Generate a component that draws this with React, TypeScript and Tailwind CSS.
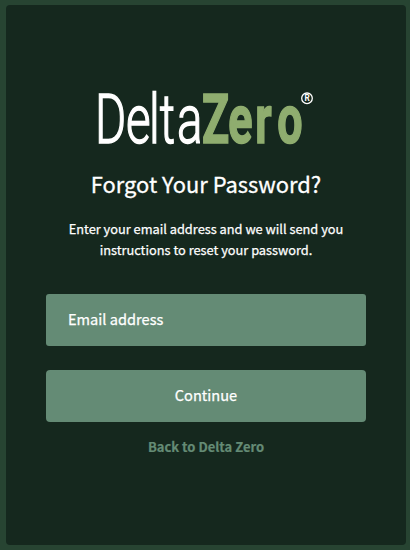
function Logo() {
  return (
    <svg width="222" height="84" viewBox="0 -10 222 84" className="block shrink-0 overflow-visible" role="img" aria-label="DeltaZero" fontFamily="Roboto, sans-serif">
      <text transform="scale(.69 1)" x="0 44.8 78.2 94 119" y="56.5" fontSize="69" fontWeight="300" fill="#fff" stroke="#fff" strokeWidth="1.5">Delta</text>
      <text transform="scale(.65 1)" x="164.5 205 246.5 280.5" y="56.5" fontSize="69" fontWeight="700" fill="#8fad6f" stroke="#8fad6f" strokeWidth="1.6">Zero</text>
      <circle cx="212" cy="12.3" r="5.3" fill="none" stroke="#fff" strokeWidth="1.3" />
      <text x="209.4" y="15.2" fontSize="8.2" fontWeight="700" fill="#fff">R</text>
    </svg>
  );
}

export default function App() {
  return (
    <div className="h-[550px] w-[410px] bg-[#274432] py-[5px] pl-[6px] pr-[4px] font-['Noto_Sans_CJK_SC','Noto_Sans',sans-serif] text-white">
      <main className="flex h-[540px] w-[400px] flex-col items-center rounded-[4px] bg-[#15281e] px-10 pt-[71px]">
        <Logo />
        <h1 className="mt-2 whitespace-nowrap text-[21.9px] leading-[32px] [-webkit-text-stroke:0.3px_white]">Forgot Your Password?</h1>
        <p className="mt-[18px] whitespace-nowrap text-center text-[12.8px] leading-[21px] [-webkit-text-stroke:0.25px_white]">
          Enter your email address and we will send you<br />instructions to reset your password.
        </p>
        <input
          type="email"
          placeholder="Email address"
          className="mt-[34px] h-[52px] w-full shrink-0 rounded-[3px] bg-[#648b75] px-[22px] pb-1 text-[14.6px] outline-none [-webkit-text-stroke:0.25px_white] placeholder:text-white placeholder:opacity-100"
        />
        <button className="mt-6 h-[52px] w-full shrink-0 rounded-[4px] bg-[#648b75] pb-[2px] text-[14.6px] [-webkit-text-stroke:0.25px_white]">Continue</button>
        <a href="#" className="mt-[14px] text-[13px] font-bold leading-[21px] text-[#648b75] [-webkit-text-stroke:0.2px_#648b75]">Back to Delta Zero</a>
      </main>
    </div>
  );
}
